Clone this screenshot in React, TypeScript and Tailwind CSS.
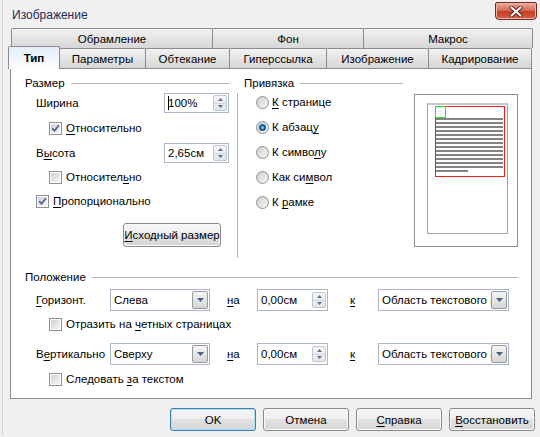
import React from "react";

const U = ({ children }: { children: React.ReactNode }) => (
  <span className="underline decoration-1 underline-offset-[2px]">{children}</span>
);

function CheckBox({ checked }: { checked?: boolean }) {
  return (
    <span className="w-[13px] h-[13px] border border-[#8e8f8f] bg-white p-px shrink-0 flex">
      <span className="flex-1 bg-linear-to-br from-[#cdd1d7] to-[#f7f7f7] flex items-center justify-center">
        {checked && (
          <svg width="9" height="9" viewBox="0 0 9 9">
            <path d="M1.2 4.3 L3.6 6.8 L7.9 1.3" fill="none" stroke="#4a5f97" strokeWidth="1.7" />
          </svg>
        )}
      </span>
    </span>
  );
}

function Radio({ checked }: { checked?: boolean }) {
  return (
    <span className="w-[13px] h-[13px] rounded-full border border-[#8e8f8f] bg-linear-to-br from-[#cbcfd5] to-[#f6f6f6] flex items-center justify-center shrink-0">
      {checked && (
        <span className="w-[7px] h-[7px] rounded-full bg-[#1f5d90] flex items-center justify-center">
          <span className="w-[3px] h-[3px] rounded-full bg-[#6fc0f0]" />
        </span>
      )}
    </span>
  );
}

function SpinArrows() {
  return (
    <span className="w-[14px] h-[16px] mr-[1px] rounded-[2px] border border-[#c0c7d1] bg-linear-to-b from-[#f7f7f7] to-[#e2e4e8] flex flex-col shrink-0">
      <span className="flex-1 flex items-center justify-center border-b border-[#d2d7de]">
        <svg width="5" height="3" viewBox="0 0 5 3">
          <path d="M0 3 H5 L2.5 0Z" fill="#5a6f92" />
        </svg>
      </span>
      <span className="flex-1 flex items-center justify-center">
        <svg width="5" height="3" viewBox="0 0 5 3">
          <path d="M0 0 H5 L2.5 3Z" fill="#5a6f92" />
        </svg>
      </span>
    </span>
  );
}

function Spin({ value, w, h, caret }: { value: string; w: string; h: string; caret?: boolean }) {
  return (
    <div className={`${w} ${h} border border-[#a9b7c9] bg-white flex items-center shrink-0`}>
      <span className="flex-1 pl-[3px] whitespace-nowrap flex items-center">
        {caret && <span className="w-px h-[14px] bg-black -mr-px" />}
        {value}
      </span>
      <SpinArrows />
    </div>
  );
}

function Combo({ value, w }: { value: string; w: string }) {
  return (
    <div className={`${w} h-[22px] border border-[#a9b7c9] bg-white flex items-center shrink-0`}>
      <span className="flex-1 pl-[3px] overflow-hidden whitespace-nowrap">{value}</span>
      <span className="w-[16px] h-[18px] mr-px rounded-[2px] border border-[#9a9a9a] bg-linear-to-b from-[#f5f5f5] to-[#d5d5d5] flex items-center justify-center shrink-0">
        <svg width="7" height="4" viewBox="0 0 7 4">
          <path d="M0 0 H7 L3.5 4Z" fill="#4d6185" />
        </svg>
      </span>
    </div>
  );
}

function Btn({ children, def }: { children: React.ReactNode; def?: boolean }) {
  return (
    <div
      className={`w-[86px] h-[23px] rounded-[3px] border flex items-center justify-center bg-[linear-gradient(#f6f6f6,#eeeeee_50%,#e1e1e1_50%,#d6d6d6)] ${
        def ? "border-[#3c7fb1] shadow-[inset_0_0_0_1px_#a8e0f6]" : "border-[#8a8a8a] shadow-[inset_0_0_0_1px_#fbfbfb]"
      }`}
    >
      {children}
    </div>
  );
}

function Tab({ children, w }: { children: React.ReactNode; w: string }) {
  return (
    <div
      className={`${w} h-[20px] -ml-px first:ml-0 border-t border-l border-r border-[#898c95] rounded-t-[2px] bg-linear-to-b from-[#f2f2f2] to-[#d6d6d6] flex items-center justify-center`}
    >
      {children}
    </div>
  );
}

function Header({ children, w, pl, mr }: { children: React.ReactNode; w: string; pl: string; mr: string }) {
  return (
    <div className={`${w} ${pl} h-[16px] flex items-center`}>
      <span>{children}</span>
      <span className={`flex-1 h-px bg-[#b4b4b4] ml-[6px] ${mr}`} />
    </div>
  );
}

function Preview() {
  const lines = Array.from({ length: 14 }, (_, i) => 25 + i * 4);
  return (
    <svg width="104" height="153" viewBox="0 0 104 153" className="shrink-0">
      <rect x="0.5" y="0.5" width="103" height="152" fill="#fff" stroke="#8d8d8d" />
      <rect x="13.5" y="9.5" width="80" height="130" fill="#fff" stroke="#a2a2a2" />
      <line x1="13.5" y1="10" x2="93.5" y2="10" stroke="#c8c8c8" strokeWidth="2" />
      {lines.map((y, i) => (
        <line key={y} x1="22" y1={y} x2={i === 13 ? 54 : 89} y2={y} stroke="#838383" strokeWidth="2" />
      ))}
      <rect x="21.5" y="12.5" width="69" height="70" fill="none" stroke="#ff1a1a" />
      <rect x="21.5" y="12.5" width="10" height="11" fill="#fff" stroke="#22e022" />
    </svg>
  );
}

export default function App() {
  return (
    <div className="w-[540px] h-[437px] bg-[#f0f0f0] pl-[2px] font-['Liberation_Sans','Noto_Sans',sans-serif] text-[11.5px] leading-[16px] text-black overflow-hidden">
      <div className="h-[435px] border-l border-[#d0d0d0] flex flex-col">
        {/* title bar */}
        <div className="h-[28px] flex items-start">
          <span className="ml-[9px] mt-[7px] text-[12px] text-[#1e2b5c]">Изображение</span>
          <div className="ml-auto mr-[3px] mt-[2px] w-[42px] h-[18px] rounded-b-[4px] rounded-t-[2px] border border-[#6e2a20] bg-[linear-gradient(#eaa898,#d4705c_45%,#c23b22_55%,#d7654a)] shadow-[inset_0_0_0_1px_#f0b4a6] flex items-center justify-center">
            <svg width="14" height="11" viewBox="0 0 14 11">
              <path d="M2.5 1.5 L11.5 9.5 M11.5 1.5 L2.5 9.5" stroke="#5a2015" strokeWidth="4" strokeLinecap="round" />
              <path d="M2.5 1.5 L11.5 9.5 M11.5 1.5 L2.5 9.5" stroke="#f4f4f4" strokeWidth="2.2" strokeLinecap="round" />
            </svg>
          </div>
        </div>

        {/* tab row 1 */}
        <div className="ml-[8px] flex">
          <Tab w="w-[202px]">Обрамление</Tab>
          <Tab w="w-[152px]">Фон</Tab>
          <Tab w="w-[170px]">Макрос</Tab>
        </div>

        {/* tab row 2 */}
        <div className="ml-[7px] h-[20px] flex items-start relative z-10">
          <div className="w-[52px] h-[23px] -mt-[2px] -ml-[2px] border-t border-l border-r border-[#898c95] rounded-t-[2px] bg-linear-to-b from-[#e4eef9] to-[#fcfdff] flex items-start justify-center pt-[3px] font-bold z-10">
            Тип
          </div>
          <Tab w="w-[87px]">Параметры</Tab>
          <Tab w="w-[85px]">Обтекание</Tab>
          <Tab w="w-[98px]">Гиперссылка</Tab>
          <Tab w="w-[103px]">Изображение</Tab>
          <Tab w="w-[104px]">Кадрирование</Tab>
        </div>

        {/* panel */}
        <div className="ml-[7px] w-[522px] h-[331px] border border-[#898c95] bg-white flex flex-col">
          <div className="flex">
            {/* Размер */}
            <div className="w-[226px] flex flex-col">
              <div className="mt-[6px]">
                <Header w="w-[226px]" pl="pl-[14px]" mr="mr-[7px]">Размер</Header>
              </div>
              <div className="mt-[2px] h-[20px] pl-[25px] pr-[8px] flex items-center">
                <span>Ширина</span>
                <span className="ml-auto">
                  <Spin value="100%" w="w-[65px]" h="h-[20px]" caret />
                </span>
              </div>
              <div className="mt-[7px] h-[16px] pl-[38px] flex items-center gap-[4px]">
                <CheckBox checked />
                <span>
                  <U>О</U>тносительно
                </span>
              </div>
              <div className="mt-[7px] h-[20px] pl-[25px] pr-[8px] flex items-center">
                <span>
                  В<U>ы</U>сота
                </span>
                <span className="ml-auto">
                  <Spin value="2,65см" w="w-[65px]" h="h-[20px]" />
                </span>
              </div>
              <div className="mt-[6px] h-[16px] pl-[38px] flex items-center gap-[4px]">
                <CheckBox />
                <span>
                  Относител<U>ь</U>но
                </span>
              </div>
              <div className="mt-[8px] h-[16px] pl-[25px] flex items-center gap-[4px]">
                <CheckBox checked />
                <span>
                  <U>П</U>ропорционально
                </span>
              </div>
              <div className="mt-[14px] ml-[112px]">
                <div className="w-[98px] h-[24px] rounded-[3px] border border-[#8a8a8a] shadow-[inset_0_0_0_1px_#fbfbfb] bg-[linear-gradient(#f6f6f6,#eeeeee_50%,#e1e1e1_50%,#d6d6d6)] flex items-center justify-center whitespace-nowrap">
                  <span>
                    <U>И</U>сходный размер
                  </span>
                </div>
              </div>
            </div>

            {/* Привязка */}
            <div className="flex-1 flex flex-col">
              <div className="mt-[6px]">
                <Header w="w-[166px]" pl="pl-[7px]" mr="mr-0">Привязка</Header>
              </div>
              <div className="mt-[2px] h-[165px] border-l border-[#b4b4b4] flex">
                <div className="pl-[18px] flex flex-col gap-[7px]">
                  <div className="h-[18px] flex items-center gap-[3px]">
                    <Radio />
                    <span>
                      <U>К</U> странице
                    </span>
                  </div>
                  <div className="h-[18px] flex items-center gap-[3px]">
                    <Radio checked />
                    <span>
                      К абзац<U>у</U>
                    </span>
                  </div>
                  <div className="h-[18px] flex items-center gap-[3px]">
                    <Radio />
                    <span>
                      К симво<U>л</U>у
                    </span>
                  </div>
                  <div className="h-[18px] flex items-center gap-[3px]">
                    <Radio />
                    <span>
                      Как си<U>м</U>вол
                    </span>
                  </div>
                  <div className="h-[18px] flex items-center gap-[3px]">
                    <Radio />
                    <span>
                      К <U>р</U>амке
                    </span>
                  </div>
                </div>
                <div className="ml-auto mr-[13px] mt-[1px]">
                  <Preview />
                </div>
              </div>
            </div>
          </div>

          {/* Положение */}
          <div className="mt-[11px]">
            <Header w="w-full" pl="pl-[14px]" mr="mr-[13px]">Положение</Header>
          </div>
          <div className="mt-[4px] h-[22px] pl-[25px] flex items-center">
            <span className="w-[74px]">
              <U>Г</U>оризонт.
            </span>
            <Combo value="Слева" w="w-[100px]" />
            <span className="ml-[17px] w-[30px]">
              <U>н</U>а
            </span>
            <Spin value="0,00см" w="w-[71px]" h="h-[22px]" />
            <span className="ml-[22px] w-[28px]">
              <U>к</U>
            </span>
            <Combo value="Область текстового абзаца" w="w-[131px]" />
          </div>
          <div className="mt-[5px] h-[16px] pl-[38px] flex items-center gap-[4px]">
            <CheckBox />
            <span>
              Отразить на <U>ч</U>етных страницах
            </span>
          </div>
          <div className="mt-[11px] h-[22px] pl-[25px] flex items-center">
            <span className="w-[74px]">
              В<U>е</U>ртикально
            </span>
            <Combo value="Сверху" w="w-[100px]" />
            <span className="ml-[17px] w-[30px]">
              <U>н</U>а
            </span>
            <Spin value="0,00см" w="w-[71px]" h="h-[22px]" />
            <span className="ml-[22px] w-[28px]">
              <U>к</U>
            </span>
            <Combo value="Область текстового абзаца" w="w-[131px]" />
          </div>
          <div className="mt-[6px] h-[16px] pl-[38px] flex items-center gap-[4px]">
            <CheckBox />
            <span>
              Следовать <U>з</U>а текстом
            </span>
          </div>
        </div>

        {/* buttons */}
        <div className="mt-[9px] pr-[5px] flex justify-end gap-[7px]">
          <Btn def>OK</Btn>
          <Btn>Отмена</Btn>
          <Btn>
            <span>
              <U>С</U>правка
            </span>
          </Btn>
          <Btn>
            <span>
              <U>В</U>осстановить
            </span>
          </Btn>
        </div>
      </div>
    </div>
  );
}
